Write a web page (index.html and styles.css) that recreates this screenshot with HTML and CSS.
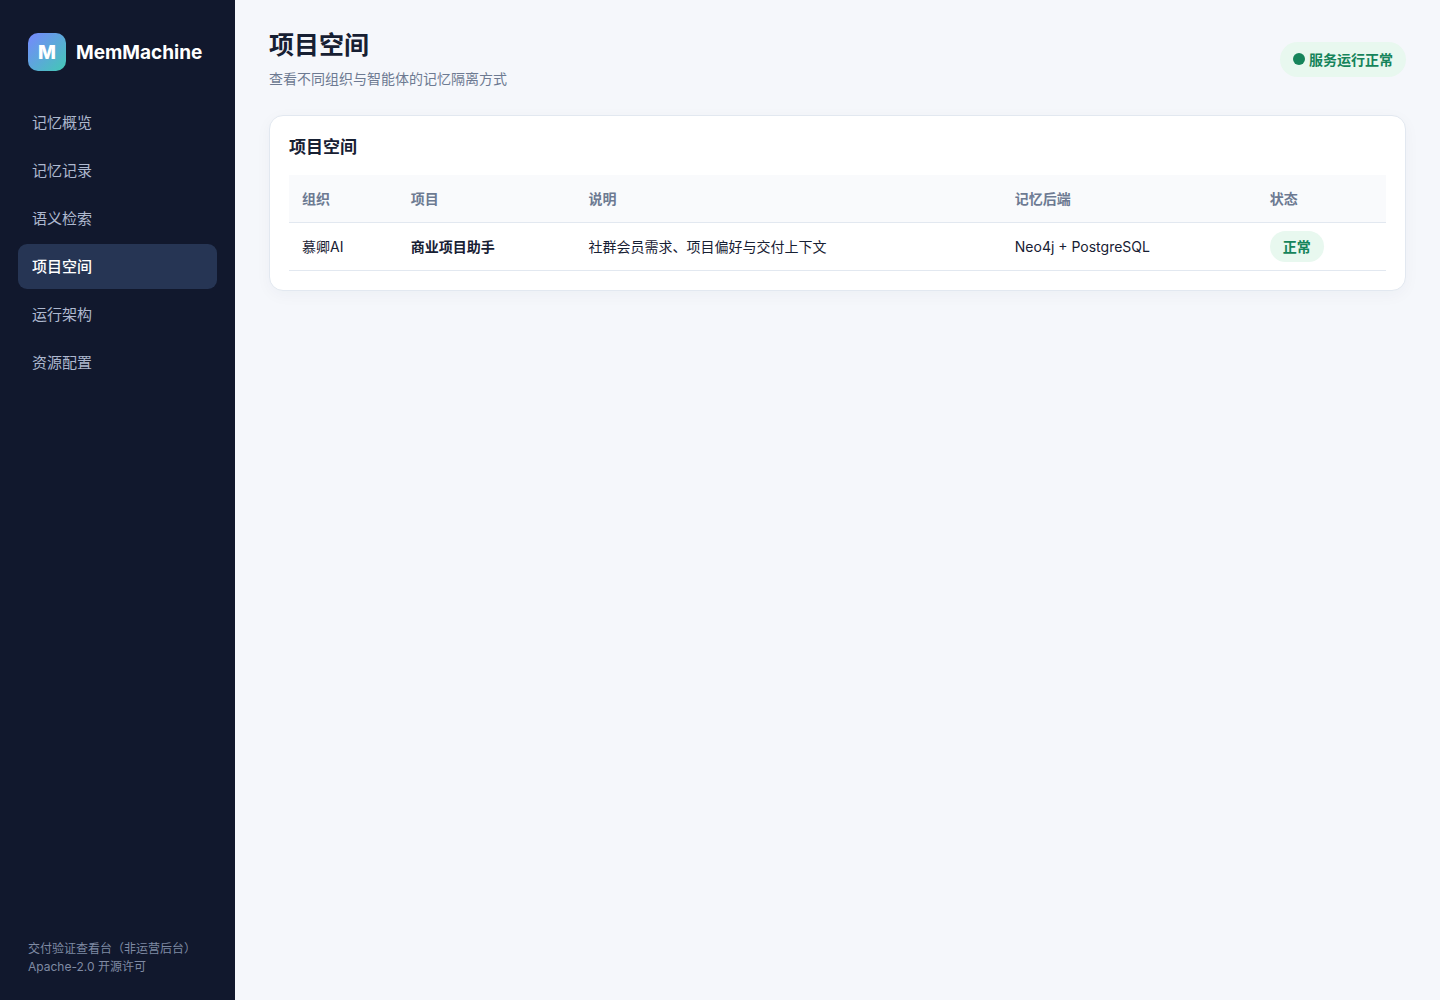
FILE: index.html
```html
<!DOCTYPE html>
<html lang="zh-CN">
<head>
    <meta charset="UTF-8">
    <meta name="viewport" content="width=device-width, initial-scale=1.0">
    <title>MemMachine</title>
    <link rel="stylesheet" href="styles.css">
</head>
<body>
    <div class="app">
        <aside class="sidebar">
            <div class="brand">
                <span class="logo">M</span>
                <span>MemMachine</span>
            </div>
            <nav class="nav">
                <button type="button">记忆概览</button>
                <button type="button">记忆记录</button>
                <button type="button">语义检索</button>
                <button type="button" class="active" aria-current="page">项目空间</button>
                <button type="button">运行架构</button>
                <button type="button">资源配置</button>
            </nav>
            <div class="side-foot">交付验证查看台（非运营后台）<br>Apache-2.0 开源许可</div>
        </aside>

        <main class="main">
            <header class="top">
                <div>
                    <h1>项目空间</h1>
                    <p class="sub">查看不同组织与智能体的记忆隔离方式</p>
                </div>
                <div class="status"><span class="dot"></span>服务运行正常</div>
            </header>

            <section class="card">
                <h2>项目空间</h2>
                <table>
                    <thead>
                        <tr>
                            <th>组织</th>
                            <th>项目</th>
                            <th>说明</th>
                            <th class="backend">记忆后端</th>
                            <th>状态</th>
                        </tr>
                    </thead>
                    <tbody>
                        <tr>
                            <td>慕卿AI</td>
                            <td><b>商业项目助手</b></td>
                            <td>社群会员需求、项目偏好与交付上下文</td>
                            <td>Neo4j + PostgreSQL</td>
                            <td><span class="tag">正常</span></td>
                        </tr>
                    </tbody>
                </table>
            </section>
        </main>
    </div>
</body>
</html>
```
FILE: styles.css
```css
* {
    box-sizing: border-box;
}
body {
    margin: 0;
    background: #f5f7fb;
    color: #172033;
    font-family: Inter, "Noto Sans CJK SC", sans-serif;
    font-size: 14px;
}
.app {
    display: flex;
    min-height: 100vh;
}

/* sidebar */
.sidebar {
    width: 235px;
    flex-shrink: 0;
    display: flex;
    flex-direction: column;
    padding: 33px 18px 24px;
    background: #11182d;
    color: #fff;
}
.brand {
    display: flex;
    align-items: center;
    gap: 10px;
    padding: 0 10px;
    margin-bottom: 29px;
    font-size: 19px;
    font-weight: 700;
}
.logo {
    display: grid;
    place-items: center;
    width: 38px;
    height: 38px;
    border-radius: 10px;
    background: linear-gradient(135deg, #7687ff, #42c9b4);
    font-weight: 800;
}
.nav {
    display: flex;
    flex-direction: column;
    gap: 3px;
}
.nav button {
    height: 45px;
    padding: 0 14px 2px;
    border: 0;
    border-radius: 9px;
    background: transparent;
    color: #aeb8cf;
    font: inherit;
    font-size: 15px;
    text-align: left;
    cursor: pointer;
}
.nav button.active {
    background: #263554;
    color: #fff;
    font-weight: 500;
}
.side-foot {
    margin-top: auto;
    padding: 0 10px;
    color: #7f8aa3;
    font-size: 12px;
    line-height: 18px;
}

/* content */
.main {
    flex: 1;
    min-width: 0;
    padding: 28px 34px;
}
.top {
    display: flex;
    justify-content: space-between;
    align-items: center;
    margin-bottom: 25px;
}
h1 {
    margin: 0 0 5px;
    font-size: 25px;
    line-height: 34px;
    font-weight: 600;
}
.sub {
    margin: 0;
    color: #6d7a92;
    line-height: 23px;
}
.status {
    display: flex;
    align-items: center;
    gap: 4px;
    padding: 7px 13px;
    border-radius: 20px;
    background: #e8f8ef;
    color: #16845b;
    line-height: 21px;
    font-weight: 600;
}
.dot {
    width: 12px;
    height: 12px;
    border-radius: 50%;
    background: currentColor;
}
.card {
    padding: 19px;
    border: 1px solid #e2e8f0;
    border-radius: 14px;
    background: #fff;
    box-shadow: 0 4px 16px rgba(30, 41, 80, 0.04);
}
h2 {
    margin: 0 0 16px;
    font-size: 17px;
    line-height: 24px;
    font-weight: 600;
}
table {
    width: 100%;
    border-collapse: collapse;
}
th, td {
    height: 48px;
    padding: 0 13px;
    border-bottom: 1px solid #e2e8f0;
    text-align: left;
}
th {
    height: 47px;
    background: #f9fafc;
    color: #6d7a92;
    font-weight: 600;
}
.backend {
    width: 255px;
}
.tag {
    display: inline-block;
    padding: 5px 13px;
    border-radius: 16px;
    background: #e8f8ef;
    color: #16845b;
    line-height: 21px;
    font-weight: 600;
}
```
